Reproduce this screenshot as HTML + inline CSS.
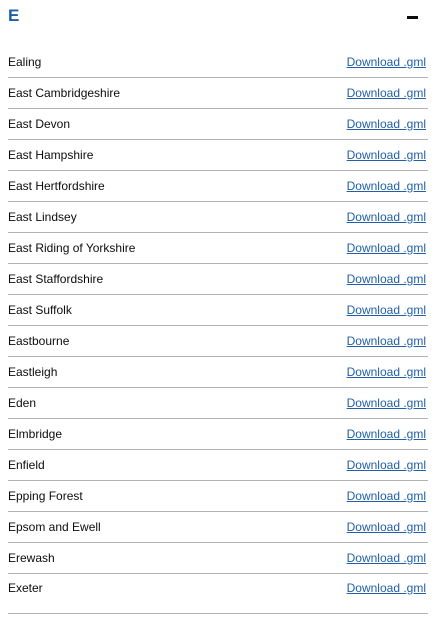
<!DOCTYPE html>
<html><head><style>
body{margin:0;width:432px;height:620px;background:#fff;font-family:"Liberation Sans",sans-serif;overflow:hidden}
.h{position:absolute;left:8px;top:6px;font-size:17px;font-weight:bold;color:#1d5fa8}
.m{position:absolute;left:407px;top:16px;width:11px;height:3px;background:#0b0c0c}
.list{position:absolute;left:8px;top:47px;width:420px}
.r{height:30px;border-bottom:1px solid #b1b4b6;display:flex;justify-content:space-between;align-items:center;font-size:12px;color:#0b0c0c}
.r a{color:#2160a8;text-decoration:underline;margin-right:2px}
.r.last{height:39px;align-items:flex-start}
.r.last span,.r.last a{margin-top:7px}
</style></head><body>
<div class="h">E</div><div class="m"></div>
<div class="list">
<div class="r"><span>Ealing</span><a>Download .gml</a></div>
<div class="r"><span>East Cambridgeshire</span><a>Download .gml</a></div>
<div class="r"><span>East Devon</span><a>Download .gml</a></div>
<div class="r"><span>East Hampshire</span><a>Download .gml</a></div>
<div class="r"><span>East Hertfordshire</span><a>Download .gml</a></div>
<div class="r"><span>East Lindsey</span><a>Download .gml</a></div>
<div class="r"><span>East Riding of Yorkshire</span><a>Download .gml</a></div>
<div class="r"><span>East Staffordshire</span><a>Download .gml</a></div>
<div class="r"><span>East Suffolk</span><a>Download .gml</a></div>
<div class="r"><span>Eastbourne</span><a>Download .gml</a></div>
<div class="r"><span>Eastleigh</span><a>Download .gml</a></div>
<div class="r"><span>Eden</span><a>Download .gml</a></div>
<div class="r"><span>Elmbridge</span><a>Download .gml</a></div>
<div class="r"><span>Enfield</span><a>Download .gml</a></div>
<div class="r"><span>Epping Forest</span><a>Download .gml</a></div>
<div class="r"><span>Epsom and Ewell</span><a>Download .gml</a></div>
<div class="r"><span>Erewash</span><a>Download .gml</a></div>
<div class="r last"><span>Exeter</span><a>Download .gml</a></div>
</div>
</body></html>
